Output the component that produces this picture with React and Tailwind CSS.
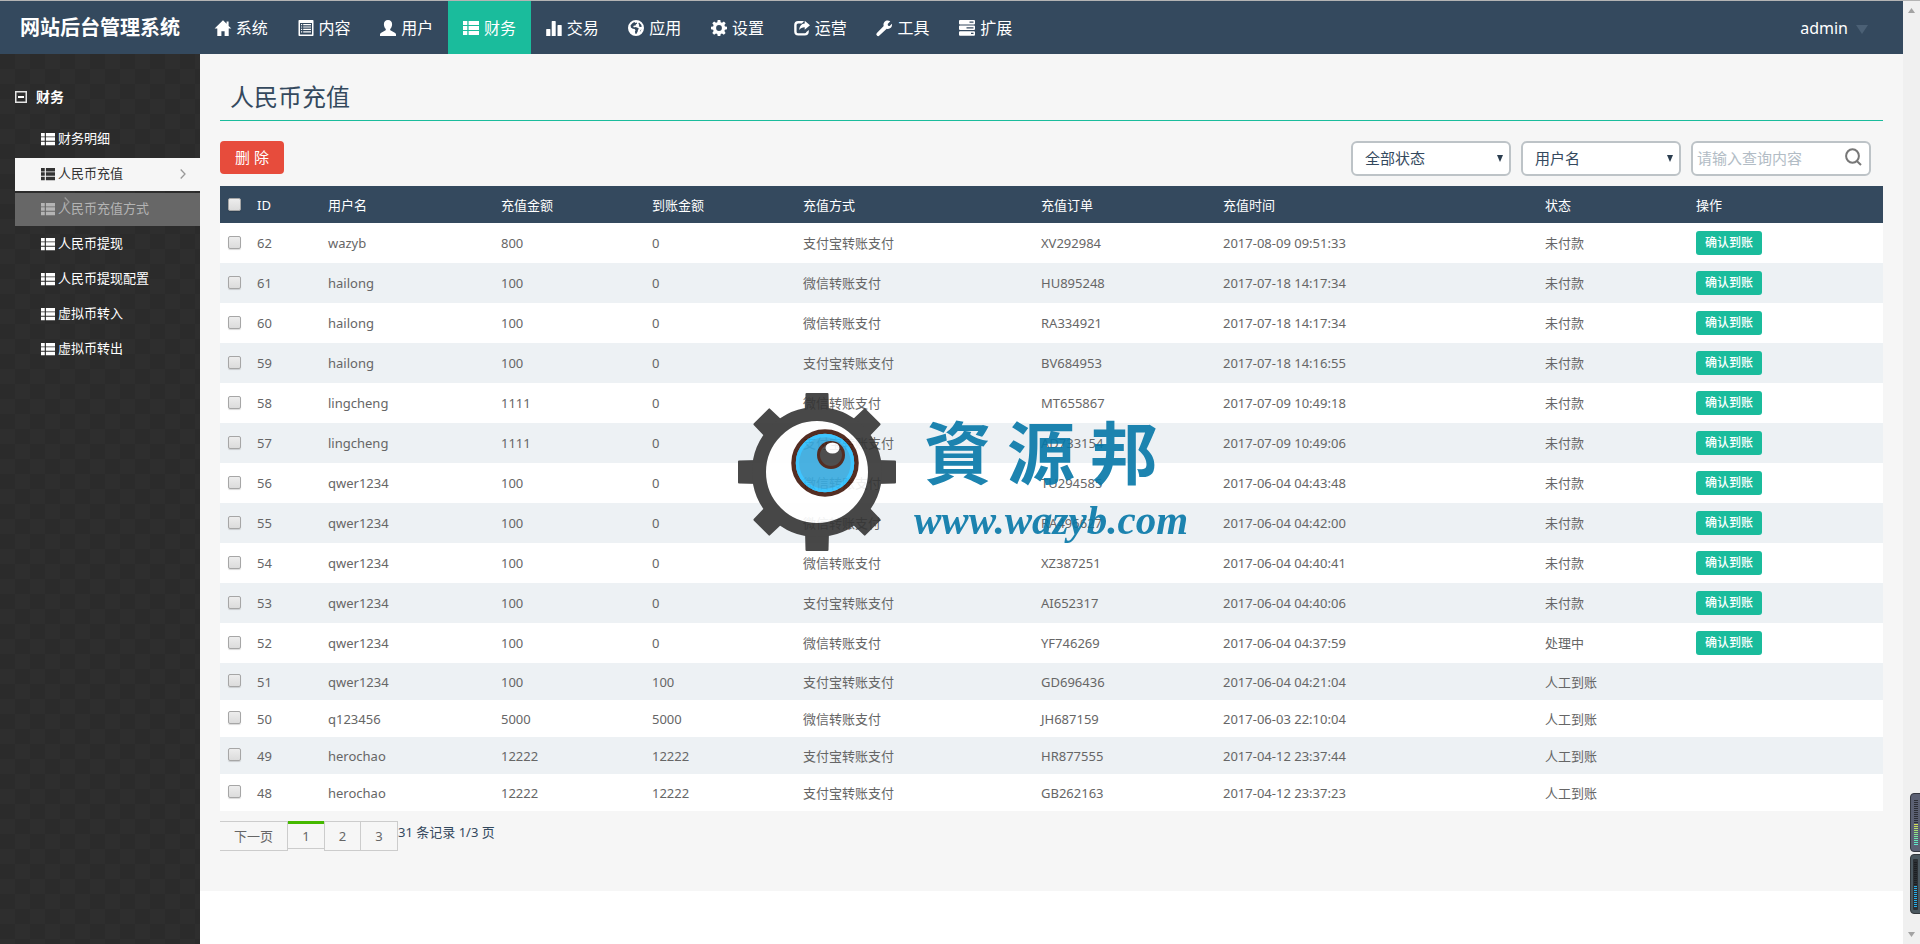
import React from "react";

const icons = {
  home: (
    <path d="M8 0.2 -0.400 8.600h2.700V16h4.100v-4.800h3.200V16h4.100V8.600h2.700L13.600 5.900V1.600h-2v2.200z" />
  ),
  content: (
    <>
      <path
        fillRule="evenodd"
        d="M1.2 0h13.6a.7.7 0 0 1 .7.7v14.6a.7.7 0 0 1-.7.7H1.2a.7.7 0 0 1-.7-.7V.7A.7.7 0 0 1 1.2 0zM2 3v11.5h12V3z"
      />
      <path d="M3 4h1.2v1.2H3zM5.2 4H13v1.2H5.2zM3 6.4h1.2v1.2H3zM5.2 6.4H13v1.2H5.2zM3 8.8h1.2V10H3zM5.2 8.8H13V10H5.2zM3 11.2h1.2v1.2H3zM5.2 11.2H13v1.2H5.2z" />
    </>
  ),
  user: (
    <path d="M8 0c2.6 0 4.1 1.7 4.1 4.2 0 1.9-.7 3.5-1.7 4.6-.4.5-.3 1.4.4 1.8l4 2.1c.8.4 1.2 1 1.2 1.7V16H0v-1.600c0-.7.4-1.300 1.200-1.700l4-2.100c.7-.4.8-1.300.4-1.800C4.600 7.700 3.900 6.100 3.900 4.200 3.900 1.700 5.400 0 8 0z" />
  ),
  list: (
    <path d="M0 1h4.300v4H0zM5.600 1H16v4H5.600zM0 6h4.300v4H0zM5.600 6H16v4H5.600zM0 11h4.300v4H0zM5.600 11H16v4H5.600z" />
  ),
  chart: (
    <path d="M.7 9h3.200a.5.500 0 0 1 .5.500V16H.2V9.500A.5.500 0 0 1 .7 9zM6.300 1h2.800a.6.600 0 0 1 .6.600V16h-4V1.600a.6.600 0 0 1 .6-.6zM12 5h3.200a.5.500 0 0 1 .5.500V16h-4.200V5.500A.5.500 0 0 1 12 5z" />
  ),
  globe: (
    <path
      fillRule="evenodd"
      d="M8 0a8 8 0 1 1 0 16A8 8 0 0 1 8 0zM6.300 2.100 4.400 3.200 2.600 5.200l.3 2.300 1.900 1.200 1.800.2.900 1.300-.6 1.500.7 2.300.9-.2 1.200-2.200.3-1.900 1-1-1.800-1.300-2.100-.3-1.100.3-.8-1 .8-.9 1.300.3.500-1.300 1.400-1L8.800 2.400 7.500 2.900zM11 2.600l-.6 1.200.9 1.300-.5 1.100 1.300.9 1.700-.3-.6-2zM13.600 9l-1.500 1.400-.2 1.600z"
    />
  ),
  cog: (
    <path
      fillRule="evenodd"
      d="M6.700 0h2.600l.4 2.200 1.300.5 1.900-1.200 1.800 1.800-1.300 1.800.6 1.300 2 .4v2.500l-2.100.4-.5 1.300 1.200 1.900-1.800 1.800-1.800-1.300-1.300.5L9.300 16H6.700l-.4-2.100-1.300-.5-1.900 1.300-1.800-1.800 1.300-1.900-.5-1.300L0 9.300V6.800l2.100-.4.500-1.300-1.300-1.800 1.800-1.800L5 2.700l1.300-.5zM8 5.100a2.900 2.900 0 1 0 0 5.800 2.900 2.900 0 0 0 0-5.800z"
    />
  ),
  share: (
    <>
      <path d="M10 1H4.200A4 4 0 0 0 .2 5v6.500a4 4 0 0 0 4 4h6.600a4 4 0 0 0 4-4V10l-2.400 2v-.2a1.400 1.400 0 0 1-1.400 1.400H4.100a1.500 1.500 0 0 1-1.500-1.500V4.900a1.500 1.500 0 0 1 1.500-1.500H8z" />
      <path d="M10.700.8 16 5.300l-5.300 4.500V7.200C8.200 7.200 6.600 8 5.200 10c.2-3.600 2-6.400 5.500-6.600z" />
    </>
  ),
  wrench: (
    <path d="M14.300 1.300 11.700 4l.3 1.700 1.700.3 2.200-2.300c.3 1.700-.1 3.100-1.100 4.100-1.200 1.100-2.700 1.300-4.100.9L3.400 15.600a1.700 1.700 0 0 1-2.500 0 1.700 1.700 0 0 1 0-2.500l6.800-7c-.5-1.600-.2-3.200.9-4.400C9.900.3 12.300-.1 14.300 1.300z" />
  ),
  server: (
    <path
      fillRule="evenodd"
      d="M1 0h14a1 1 0 0 1 1 1v2.400a1 1 0 0 1-1 1H1a1 1 0 0 1-1-1V1a1 1 0 0 1 1-1zm9.500 1.500v1.300h4V1.500zM1 5.600h14a1 1 0 0 1 1 1V9a1 1 0 0 1-1 1H1a1 1 0 0 1-1-1V6.600a1 1 0 0 1 1-1zm6.500 1.600v1.300h7V7.200zM1 11.300h14a1 1 0 0 1 1 1v2.400a1 1 0 0 1-1 1H1a1 1 0 0 1-1-1v-2.400a1 1 0 0 1 1-1zm11 1.500v1.300h2.500v-1.300z"
    />
  ),
};

function Icon({ name, className }) {
  return (
    <svg viewBox="0 0 16 16" fill="currentColor" aria-hidden="true" className={className}>
      {icons[name]}
    </svg>
  );
}

function Chevron({ className }) {
  return (
    <svg viewBox="0 0 6 10" fill="none" stroke="#999" strokeWidth="1.300" aria-hidden="true" className={className}>
      <path d="M.7.500 5 5 .7 9.500" />
    </svg>
  );
}

const navItems = [
  ["系统", "home"],
  ["内容", "content"],
  ["用户", "user"],
  ["财务", "list"],
  ["交易", "chart"],
  ["应用", "globe"],
  ["设置", "cog"],
  ["运营", "share"],
  ["工具", "wrench"],
  ["扩展", "server"],
];

const menuItems = ["财务明细", "人民币充值", "人民币充值方式", "人民币提现", "人民币提现配置", "虚拟币转入", "虚拟币转出"];

const ali = "支付宝转账支付";
const wechat = "微信转账支付";

const rows = [
  ["62", "wazyb", "800", "0", ali, "XV292984", "2017-08-09 09:51:33", "未付款"],
  ["61", "hailong", "100", "0", wechat, "HU895248", "2017-07-18 14:17:34", "未付款"],
  ["60", "hailong", "100", "0", wechat, "RA334921", "2017-07-18 14:17:34", "未付款"],
  ["59", "hailong", "100", "0", ali, "BV684953", "2017-07-18 14:16:55", "未付款"],
  ["58", "lingcheng", "1111", "0", wechat, "MT655867", "2017-07-09 10:49:18", "未付款"],
  ["57", "lingcheng", "1111", "0", ali, "AD733154", "2017-07-09 10:49:06", "未付款"],
  ["56", "qwer1234", "100", "0", wechat, "TU294585", "2017-06-04 04:43:48", "未付款"],
  ["55", "qwer1234", "100", "0", wechat, "RA496627", "2017-06-04 04:42:00", "未付款"],
  ["54", "qwer1234", "100", "0", wechat, "XZ387251", "2017-06-04 04:40:41", "未付款"],
  ["53", "qwer1234", "100", "0", ali, "AI652317", "2017-06-04 04:40:06", "未付款"],
  ["52", "qwer1234", "100", "0", wechat, "YF746269", "2017-06-04 04:37:59", "处理中"],
  ["51", "qwer1234", "100", "100", ali, "GD696436", "2017-06-04 04:21:04", "人工到账"],
  ["50", "q123456", "5000", "5000", wechat, "JH687159", "2017-06-03 22:10:04", "人工到账"],
  ["49", "herochao", "12222", "12222", ali, "HR877555", "2017-04-12 23:37:44", "人工到账"],
  ["48", "herochao", "12222", "12222", ali, "GB262163", "2017-04-12 23:37:23", "人工到账"],
];

const columns = [
  ["ID", "w-[71px]"],
  ["用户名", "w-[173px]"],
  ["充值金额", "w-[151px]"],
  ["到账金额", "w-[151px]"],
  ["充值方式", "w-[238px]"],
  ["充值订单", "w-[182px]"],
  ["充值时间", "w-[322px]"],
  ["状态", "w-[151px]"],
  ["操作", "w-[195px]"],
];

function Tick({ label }) {
  return (
    <input
      type="checkbox"
      aria-label={label}
      className="block size-[13px] appearance-none rounded-xs border border-[#a6a6a6] bg-linear-to-b from-[#ededed] to-[#dcdcdc] shadow-[0_1px_1px_rgba(0,0,0,0.15)] checked:bg-[#1abc9c]"
    />
  );
}

function Header() {
  return (
    <header className="flex h-[53px] items-stretch bg-[#34495e] text-white">
      <div className="flex w-[200px] shrink-0 items-center pl-5 text-xl font-bold whitespace-nowrap">网站后台管理系统</div>
      <nav className="grid w-[827px] grid-cols-10">
        {navItems.map(([label, icon]) => (
          <a
            key={label}
            href="#"
            className={
              label === "财务"
                ? "flex items-center justify-center gap-[5px] bg-[#1abc9c] text-base whitespace-nowrap"
                : "flex items-center justify-center gap-[5px] text-base whitespace-nowrap"
            }
          >
            <Icon name={icon} className="size-4 shrink-0 overflow-visible" />
            {label}
          </a>
        ))}
      </nav>
      <button type="button" className="ml-auto flex items-center gap-2 pr-[35px] text-base">
        admin
        <svg viewBox="0 0 12 9" aria-hidden="true" className="mt-1 h-[9px] w-3 fill-[#4b6075]">
          <path d="M0 0h12L6 9z" />
        </svg>
      </button>
    </header>
  );
}

function Sidebar() {
  return (
    <aside className="w-[200px] shrink-0 bg-[conic-gradient(#2e2e2e_25%,#2b2b2b_0_50%,#2e2e2e_0_75%,#2b2b2b_0)] bg-[length:30px_30px] pt-7 pl-[15px] text-white">
      <button type="button" className="flex h-[30px] items-center gap-[9px] text-sm font-bold">
        <svg viewBox="0 0 12 12" aria-hidden="true" className="size-3">
          <path d="M.75.750h10.500v10.500H.75z" fill="none" stroke="#e4e4e4" strokeWidth="1.500" />
          <path d="M3 5h6v2H3z" fill="#fff" />
        </svg>
        财务
      </button>
      <ul className="flex flex-col gap-0.5 pt-[11px]">
        {menuItems.map((label) => {
          const active = label === "人民币充值";
          const hovered = label === "人民币充值方式";
          const tone = active ? "bg-[#f6f6f6] text-[#333]" : hovered ? "bg-[#676767] text-[#b4b4b4]" : "text-white";
          return (
            <li key={label}>
              <a
                href="#"
                className={"relative flex h-[33px] items-center gap-[3px] pb-0.5 pl-[26px] text-[13px] whitespace-nowrap " + tone}
              >
                <Icon name="list" className="size-[14px]" />
                {label}
                {active && <Chevron className="mr-[14px] ml-auto h-[10px] w-[6px]" />}
                {hovered && <Chevron className="absolute top-1 left-[49px] h-[10px] w-[6px]" />}
              </a>
            </li>
          );
        })}
      </ul>
    </aside>
  );
}

function Filter({ label, options }) {
  return (
    <div className="relative">
      <select
        aria-label={label}
        className="h-[35px] w-40 appearance-none rounded-md border-2 border-[#bdc3c7] bg-white pl-3 text-[15px] text-[#34495e]"
      >
        {options.map((o) => (
          <option key={o}>{o}</option>
        ))}
      </select>
      <svg viewBox="0 0 6 7" aria-hidden="true" className="pointer-events-none absolute top-[14px] right-2 h-[7px] w-[6px] fill-[#2c3e50]">
        <path d="M0 0h6L3 7z" />
      </svg>
    </div>
  );
}

function Toolbar() {
  return (
    <div className="mt-5 mb-[10px] flex h-[35px] items-start">
      <button type="button" className="h-[33px] w-16 rounded bg-[#e74c3c] text-[15px] text-white">
        删 除
      </button>
      <form className="mr-3 ml-auto flex gap-[10px]">
        <Filter label="状态" options={["全部状态", "未付款", "处理中", "人工到账"]} />
        <Filter label="查询字段" options={["用户名", "充值订单"]} />
        <div className="flex h-[35px] w-[180px] items-center rounded-md border-2 border-[#bdc3c7] bg-white pr-[7px] pl-1">
          <input
            type="text"
            aria-label="查询内容"
            placeholder="请输入查询内容"
            className="min-w-0 grow bg-transparent text-[15px] text-[#34495e] outline-none placeholder:text-[#b2bcc5]"
          />
          <button type="submit" aria-label="查询" className="mb-1">
            <svg viewBox="0 0 17 18" fill="none" stroke="#777" strokeWidth="2" aria-hidden="true" className="h-[18px] w-[17px]">
              <ellipse cx="7.500" cy="8" rx="6.400" ry="6.800" />
              <path d="m11.800 13 4.200 4" />
            </svg>
          </button>
        </div>
      </form>
    </div>
  );
}

function Records() {
  return (
    <table className="w-full table-fixed border-collapse text-left text-[13px] leading-5 text-[#666]">
      <thead>
        <tr className="h-[37px] bg-[#34495e] text-white">
          <th className="w-[29px] pl-2">
            <Tick label="全选" />
          </th>
          {columns.map(([label, width]) => (
            <th key={label} className={"px-2 font-normal " + width}>
              {label}
            </th>
          ))}
        </tr>
      </thead>
      <tbody>
        {rows.map((row) => {
          const pending = row[7] !== "人工到账";
          return (
            <tr key={row[0]} className={(pending ? "h-10" : "h-[37px]") + " bg-white even:bg-[#edf1f4]"}>
              <td className="pb-0.5 pl-2">
                <Tick label={"选择 " + row[0]} />
              </td>
              {row.map((cell, i) => (
                <td key={i} className="px-2">
                  {cell}
                </td>
              ))}
              <td className="px-2">
                {pending && (
                  <button type="button" className="block h-6 rounded-[3px] bg-[#1abc9c] px-[9px] text-xs font-medium text-white">
                    确认到账
                  </button>
                )}
              </td>
            </tr>
          );
        })}
      </tbody>
    </table>
  );
}

function Pager() {
  return (
    <div className="mt-[10px] flex h-[30px] items-start text-[13px]">
      <a href="#" className="flex h-[30px] items-center border border-l-0 border-[#ccc] px-[14px] pt-0.5 text-[#666]">
        下一页
      </a>
      <a
        href="#"
        aria-current="page"
        className="flex h-7 w-9 items-center justify-center border-t-3 border-b border-t-[#45b900] border-b-[#ccc] pt-0.5 text-[#666]"
      >
        1
      </a>
      <a href="#" className="flex h-[30px] w-[37px] items-center justify-center border border-[#ccc] pt-0.5 text-[#666]">
        2
      </a>
      <a href="#" className="flex h-[30px] w-[37px] items-center justify-center border border-l-0 border-[#ccc] pt-0.5 text-[#666]">
        3
      </a>
      <span className="leading-[22px] text-[#34495e]">31 条记录 1/3 页</span>
    </div>
  );
}

function Watermark() {
  return (
    <div className="pointer-events-none fixed inset-0 flex items-center justify-center opacity-90">
      <div className="flex items-center gap-[18px]">
        <svg viewBox="0 0 160 158" aria-hidden="true" className="h-[158px] w-40">
          <circle cx="81" cy="79" r="52" fill="#fff" />
          <g fill="#353535">
            {[0, 45, 90, 135, 180, 225, 270, 315].map((angle) => (
              <path key={angle} transform={`rotate(${angle} 81 79)`} d="M69 20 69.500 1q0-1 1-1h21q1 0 1 1L93 20z" />
            ))}
          </g>
          <circle cx="81" cy="79" r="58" fill="none" stroke="#353535" strokeWidth="14" />
          <circle cx="89" cy="70" r="31.500" fill="#36a9de" stroke="#43180c" strokeWidth="4.500" />
          <circle cx="89" cy="70" r="27.500" fill="none" stroke="#2bbfff" strokeWidth="3.500" />
          <circle cx="95" cy="62" r="12.500" fill="#3c3c3c" stroke="#43180c" strokeWidth="3" />
          <ellipse cx="96.500" cy="55" rx="7" ry="5.500" fill="#fff" />
        </svg>
        <div className="flex w-[270px] flex-col pt-5 text-[#0577a8]">
          <div className="flex gap-[15px] pl-[10px] text-[68px] leading-[76px] font-bold">
            <span>資</span>
            <span>源</span>
            <span>邦</span>
          </div>
          <div className="font-['Liberation_Serif',serif] text-[41px] leading-[58px] font-bold whitespace-nowrap italic">www.wazyb.com</div>
        </div>
      </div>
    </div>
  );
}

const meterTicks = Array.from({ length: 23 }, (_, i) => i);
const warm = ["#d3dc55", "#c6e05c", "#b7e266", "#a6e372", "#95e480", "#86e68e", "#78e89d", "#6de8ab", "#66e9b8", "#62e8c3", "#60e6cc"];

function Meters() {
  return (
    <div className="fixed right-0 bottom-[30px] flex flex-col gap-[2px]">
      <svg viewBox="0 0 10 59" aria-hidden="true" className="h-[59px] w-[10px]">
        <path d="M10 .5H4A3.500 3.500 0 0 0 .5 4v51A3.500 3.500 0 0 0 4 58.500h6" fill="#5b6073" stroke="#33363f" />
        {meterTicks.map((i) => (
          <rect key={i} x="4" y={7 + i * 2} width="4" height="1" fill={i < 12 ? "#2c2e36" : warm[i - 12]} />
        ))}
      </svg>
      <svg viewBox="0 0 10 60" aria-hidden="true" className="h-[60px] w-[10px]">
        <path d="M10 .5H4A3.500 3.500 0 0 0 .5 4v52A3.500 3.500 0 0 0 4 59.500h6" fill="#4b585f" stroke="#33383c" />
        <rect x="3" y="5" width="5" height="51" rx="1" fill="#2b3034" />
        {meterTicks.map((i) => (
          <rect key={i} x="4" y={8 + i * 2} width="3" height="1" fill={i < 12 ? "#1c1f22" : "#27aee8"} />
        ))}
      </svg>
    </div>
  );
}

export default function App() {
  return (
    <div className="flex min-h-screen border-t border-[#b4b4b4] bg-white font-['Noto_Sans','Noto_Sans_CJK_SC',sans-serif]">
      <div className="flex min-w-0 grow flex-col">
        <Header />
        <div className="flex grow items-stretch">
          <Sidebar />
          <div className="min-w-0 grow">
            <main className="bg-[#f6f6f6] px-5 pb-10">
              <h1 className="border-b border-[#1abc9c] pt-[25px] pb-[5px] pl-[10px] text-2xl leading-9 text-[#34495e]">人民币充值</h1>
              <Toolbar />
              <Records />
              <Pager />
            </main>
          </div>
        </div>
      </div>
      <div aria-hidden="true" className="flex w-[17px] shrink-0 flex-col items-center justify-between bg-[#f0f0f0] py-[7px]">
        <svg viewBox="0 0 7 5" className="h-[5px] w-[7px] fill-[#a3a3a3]">
          <path d="M0 5h7L3.500 0z" />
        </svg>
        <svg viewBox="0 0 7 5" className="h-[5px] w-[7px] fill-[#a3a3a3]">
          <path d="M0 0h7L3.500 5z" />
        </svg>
      </div>
      <Watermark />
      <Meters />
    </div>
  );
}
